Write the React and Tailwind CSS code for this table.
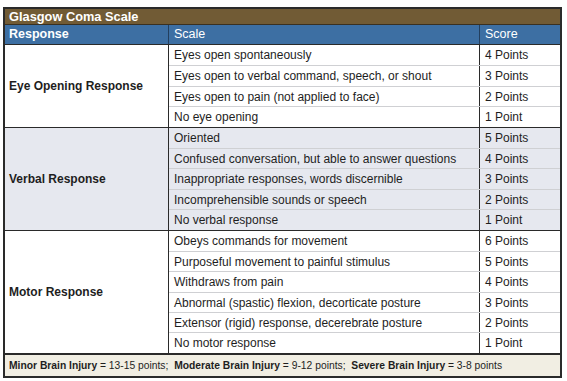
import React from "react";

const sections = [
  {
    name: "Eye Opening Response",
    bg: "bg-white",
    rows: [
      ["Eyes open spontaneously", "4 Points"],
      ["Eyes open to verbal command, speech, or shout", "3 Points"],
      ["Eyes open to pain (not applied to face)", "2 Points"],
      ["No eye opening", "1 Point"],
    ],
  },
  {
    name: "Verbal Response",
    bg: "bg-[#e6e8ef]",
    rows: [
      ["Oriented", "5 Points"],
      ["Confused conversation, but able to answer questions", "4 Points"],
      ["Inappropriate responses, words discernible", "3 Points"],
      ["Incomprehensible sounds or speech", "2 Points"],
      ["No verbal response", "1 Point"],
    ],
  },
  {
    name: "Motor Response",
    bg: "bg-white",
    rows: [
      ["Obeys commands for movement", "6 Points"],
      ["Purposeful movement to painful stimulus", "5 Points"],
      ["Withdraws from pain", "4 Points"],
      ["Abnormal (spastic) flexion, decorticate posture", "3 Points"],
      ["Extensor (rigid) response, decerebrate posture", "2 Points"],
      ["No motor response", "1 Point"],
    ],
  },
];

export default function App() {
  return (
    <div className="w-[567px] h-[381px] bg-white pt-[7px] pl-[3px] font-['Liberation_Sans',Arial,sans-serif] text-[12px] text-[#1e1e1e]">
      <div className="w-[559px] border-2 border-[#2a2a2a] flex flex-col">
        <div className="h-[16px] bg-[#715b35] border-b border-[#3a3020] text-white font-bold leading-[15px] pl-[4px] text-[12.8px]">
          Glasgow Coma Scale
        </div>
        <div className="h-[20px] bg-[#3d6fa3] text-white flex leading-[19px] text-[12.5px] border-b border-[#2a2a2a]">
          <div className="w-[164px] pl-[4px] font-bold border-r border-[#233f5e]">Response</div>
          <div className="w-[311px] pl-[5px] border-r border-[#233f5e]">Scale</div>
          <div className="flex-1 pl-[5px]">Score</div>
        </div>
        {sections.map((s, i) => (
          <div
            key={s.name}
            className={`flex ${s.bg} ${i > 0 ? "border-t border-[#2a2a2a]" : ""}`}
          >
            <div className="w-[164px] flex items-center pl-[4px] font-bold border-r border-[#2a2a2a]">
              {s.name}
            </div>
            <div className="flex-1 flex flex-col">
              {s.rows.map((r, j) => (
                <div
                  key={r[0]}
                  className={`flex h-[20.4px] leading-[20px] ${j > 0 ? "border-t border-[#cfd0d3]" : ""}`}
                >
                  <div className="w-[311px] pl-[5px] border-r border-[#2a2a2a]">{r[0]}</div>
                  <div className="flex-1 pl-[5px]">{r[1]}</div>
                </div>
              ))}
            </div>
          </div>
        ))}
        <div className="h-[23px] bg-[#f1eee3] border-t-2 border-[#2a2a2a] leading-[22px] pl-[4px] text-[10.3px]">
          <span className="font-bold">Minor Brain Injury</span> = 13-15 points;{"\u00a0 "}
          <span className="font-bold">Moderate Brain Injury</span> = 9-12 points;{"\u00a0 "}
          <span className="font-bold">Severe Brain Injury</span> = 3-8 points
        </div>
      </div>
    </div>
  );
}
